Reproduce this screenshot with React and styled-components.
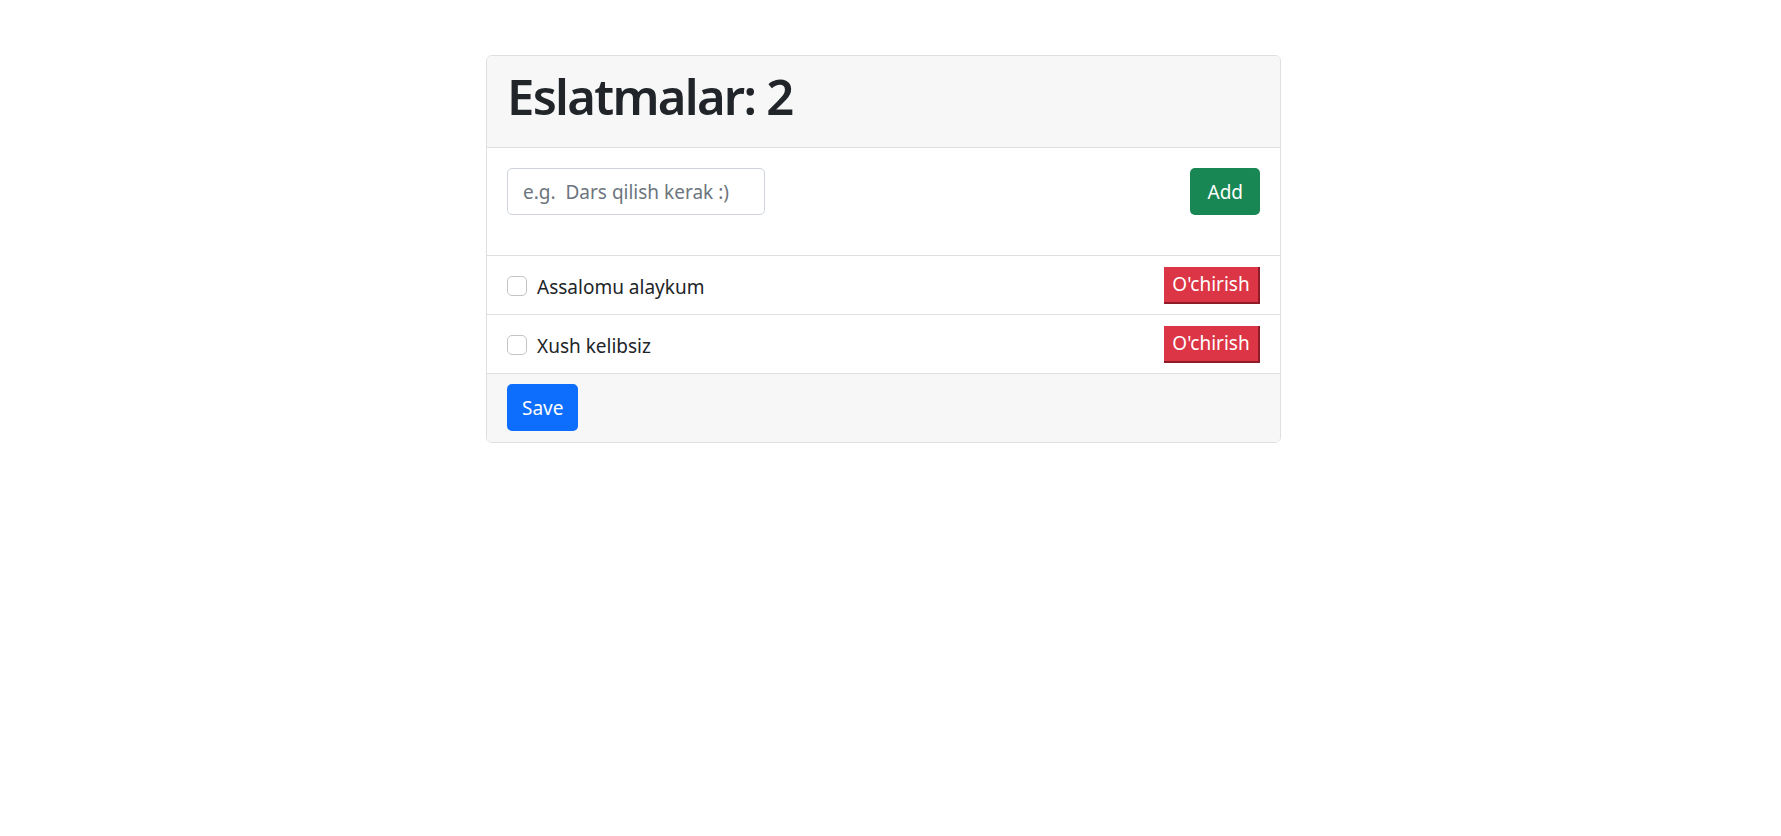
import React, { useState } from "react";
import styled, { createGlobalStyle } from "styled-components";

const GlobalStyle = createGlobalStyle`
  * { box-sizing: border-box; }
  body {
    margin: 0;
    background: #fff;
    color: #212529;
    font-family: "Noto Sans", "Open Sans", sans-serif;
    font-size: 20px;
  }
`;

const Page = styled.div`
  display: flex;
  justify-content: center;
  padding: 55px 14px 0 0;
`;

const Card = styled.div`
  width: 795px;
  border: 1px solid #dfdfdf;
  border-radius: 6px;
  overflow: hidden;
`;

const CardHeader = styled.div`
  background: #f7f7f7;
  padding: 10px 20px;
  border-bottom: 1px solid #dfdfdf;
`;

const Title = styled.h1`
  margin: 0 0 11px;
  font-size: 49px;
  font-weight: 600;
  line-height: 60px;
  letter-spacing: -1.7px;
`;

const CardBody = styled.div`
  padding: 20px 20px 0;
`;

const Form = styled.form`
  display: flex;
  justify-content: space-between;
  align-items: flex-start;
  margin-bottom: 40px;
`;

const Input = styled.input`
  width: 258px;
  height: 47px;
  padding: 0 15px;
  border: 1px solid #ced4da;
  border-radius: 5px;
  font: inherit;
  font-size: 19px;
  color: #212529;
  &::placeholder { color: #6c757d; }
  &:focus { outline: none; }
`;

const Button = styled.button`
  height: 47px;
  padding: 0 ${({ $px }) => $px}px;
  border: none;
  border-radius: 5px;
  background: ${({ $bg }) => $bg};
  color: #fff;
  font: inherit;
  font-size: 19px;
  cursor: pointer;
`;

const List = styled.ul`
  list-style: none;
  margin: 0;
  padding: 0;
`;

const Item = styled.li`
  display: flex;
  align-items: center;
  justify-content: space-between;
  height: 59px;
  padding: 0 20px;
  border-top: 1px solid #dfdfdf;
`;

const Label = styled.label`
  display: flex;
  align-items: center;
  gap: 10px;
  font-size: 19px;
`;

const LabelText = styled.span`
  padding-top: 4px;
`;

const Check = styled.input`
  appearance: none;
  width: 20px;
  height: 20px;
  margin: 2px 0 0;
  border: 1px solid #c4c4c4;
  border-radius: 5px;
  background: #fff;
`;

const DeleteButton = styled.button`
  width: 96px;
  height: 37px;
  padding: 0;
  background: #dc3545;
  color: #fff;
  border: none;
  border-right: 2px solid #8e1d29;
  border-bottom: 2px solid #8e1d29;
  font: inherit;
  font-size: 19px;
  cursor: pointer;
`;

const CardFooter = styled.div`
  background: #f7f7f7;
  padding: 10px 20px 11px;
  border-top: 1px solid #dfdfdf;
`;

const App = () => {
  const [todos] = useState(["Assalomu alaykum", "Xush kelibsiz"]);

  return (
    <>
      <GlobalStyle />
      <Page>
        <Card>
          <CardHeader>
            <Title>Eslatmalar: {todos.length}</Title>
          </CardHeader>
          <CardBody>
            <Form onSubmit={(e) => e.preventDefault()}>
              <Input placeholder="e.g.  Dars qilish kerak :)" />
              <Button $bg="#198754" $px={17}>Add</Button>
            </Form>
          </CardBody>
          <List>
            {todos.map((t) => (
              <Item key={t}>
                <Label>
                  <Check type="checkbox" />
                  <LabelText>{t}</LabelText>
                </Label>
                <DeleteButton>O'chirish</DeleteButton>
              </Item>
            ))}
          </List>
          <CardFooter>
            <Button $bg="#0d6efd" $px={15}>Save</Button>
          </CardFooter>
        </Card>
      </Page>
    </>
  );
};

export default App;
